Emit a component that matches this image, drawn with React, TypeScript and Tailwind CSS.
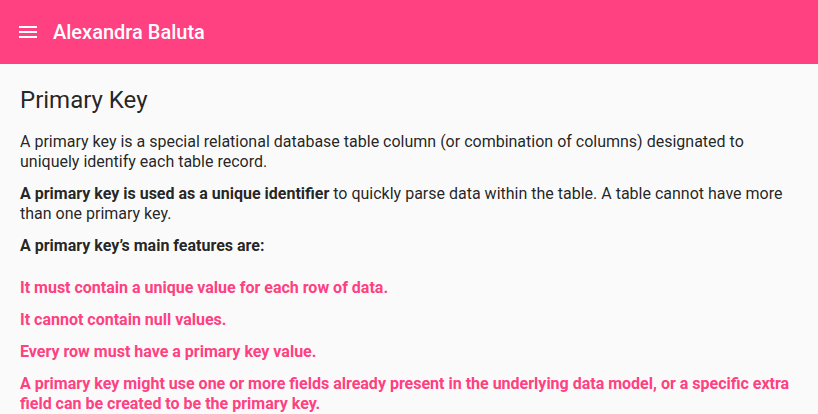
export default function App() {
  const features = [
    "It must contain a unique value for each row of data.",
    "It cannot contain null values.",
    "Every row must have a primary key value.",
    "A primary key might use one or more fields already present in the underlying data model, or a specific extra field can be created to be the primary key.",
  ];

  return (
    <div className="min-h-screen bg-[#fafafa] font-['Roboto',sans-serif] text-[rgba(0,0,0,0.87)]">
      <header className="flex h-16 items-center bg-[#ff4081] px-4 text-white">
        <svg width="24" height="24" viewBox="0 0 24 24" fill="currentColor">
          <path d="M3 18h18v-2H3v2zm0-5h18v-2H3v2zm0-7v2h18V6H3z" />
        </svg>
        <span className="ml-[13px] text-[20px] font-medium">Alexandra Baluta</span>
      </header>

      <main className="px-5 pt-5">
        <h1 className="mb-4 text-[24px] leading-8">Primary Key</h1>
        <p className="mb-3 text-[16px] leading-5">
          A primary key is a special relational database table column (or combination of columns) designated to uniquely
          identify each table record.
        </p>
        <p className="mb-3 text-[16px] leading-5">
          <b className="font-bold">A primary key is used as a unique identifier</b> to quickly parse data within the
          table. A table cannot have more than one primary key.
        </p>
        <p className="mb-[22px] text-[16px] font-bold leading-5">A primary key’s main features are:</p>
        <ul className="text-[16px] font-bold leading-5 text-[#ff4081]">
          {features.map((f) => (
            <li key={f} className="mb-3">
              {f}
            </li>
          ))}
        </ul>
      </main>
    </div>
  );
}
